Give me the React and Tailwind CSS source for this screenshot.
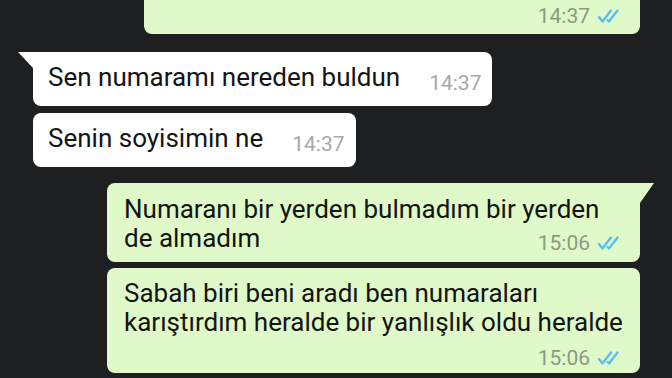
const font = { fontFamily: 'Roboto, "Noto Sans", sans-serif' };

const Ticks = () => (
  <svg width="28" height="14" viewBox="0 0 28 14" fill="none" stroke="#52bdf0" strokeWidth="2.2" strokeLinecap="round" strokeLinejoin="round">
    <path d="M2 8 L5.5 12.5 L14 1.5" />
    <path d="M10.5 11 L12 12.5 L20.5 1.5" />
  </svg>
);

const OutTime = ({ time }) => (
  <div className="flex items-center gap-[7px]">
    <span className="text-[21px] leading-[20px] text-[#8a9b80]">{time}</span>
    <Ticks />
  </div>
);

const Incoming = ({ text, time, tail }) => (
  <div className="flex items-start">
    <div className="w-[15px] shrink-0">
      {tail && (
        <svg width="15" height="16" viewBox="0 0 15 16">
          <path d="M0 0 L15 0 L15 16 Z" fill="#ffffff" />
        </svg>
      )}
    </div>
    <div className={`flex items-start bg-white pl-[15px] pr-[11px] pt-[11px] pb-[14px] rounded-[8px] ${tail ? 'rounded-tl-none' : ''}`}>
      <span className="text-[26px] leading-[29px] text-[#141414]">{text}</span>
      <span className="ml-[29px] mt-[11px] text-[21px] leading-[18px] text-[#a8a8a8]">{time}</span>
    </div>
  </div>
);

export default function App() {
  return (
    <div style={font} className="w-[672px] h-[378px] overflow-hidden bg-[#1d1f20] pr-[32px] flex flex-col items-end">
      <div className="w-[496px] h-[34px] bg-[#dff9c9] rounded-b-[8px] flex items-end justify-end pr-[15px] pb-[8px]">
        <OutTime time="14:37" />
      </div>

      <div className="self-start pl-[18px] mt-[18px] flex flex-col gap-[7px]">
        <Incoming tail text="Sen numaramı nereden buldun" time="14:37" />
        <Incoming text="Senin soyisimin ne" time="14:37" />
      </div>

      <div className="mt-[16px] flex items-start">
        <div className="w-[533px] bg-[#dff9c9] rounded-[8px] rounded-tr-none pl-[17px] pr-[15px] pt-[12px] pb-[9px]">
          <div className="text-[26px] leading-[29px] text-[#141414]">
            Numaranı bir yerden bulmadım bir yerden
            <br />
            de almadım
          </div>
          <div className="-mt-[20px] h-[20px] flex justify-end">
            <OutTime time="15:06" />
          </div>
        </div>
        <svg width="14" height="20" viewBox="0 0 14 20" className="-mr-[14px]">
          <path d="M0 0 L14 0 L0 20 Z" fill="#dff9c9" />
        </svg>
      </div>

      <div className="mt-[6px] w-[533px] bg-[#dff9c9] rounded-[8px] pl-[17px] pr-[15px] pt-[11px] pb-[1px]">
        <div className="text-[26px] leading-[29px] text-[#141414]">
          Sabah biri beni aradı ben numaraları
          <br />
          karıştırdım heralde bir yanlışlık oldu heralde
        </div>
        <div className="mt-[6px] h-[29px] flex items-center justify-end">
          <OutTime time="15:06" />
        </div>
      </div>
    </div>
  );
}
